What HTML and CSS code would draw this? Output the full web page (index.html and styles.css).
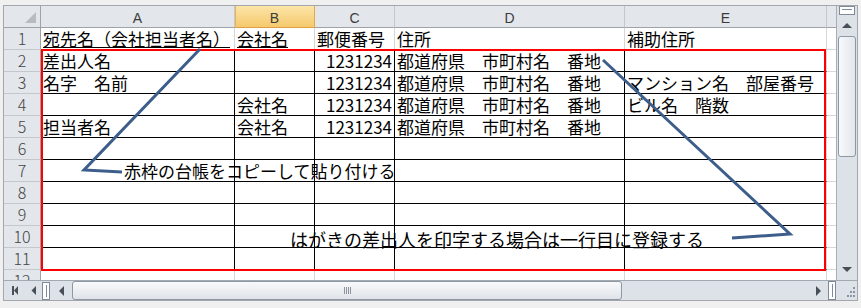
FILE: index.html
```html
<!DOCTYPE html>
<html lang="ja">
<head>
<meta charset="utf-8">
<title>Sheet</title>
<link rel="stylesheet" href="styles.css">
</head>
<body>
<div class="frame">
  <div class="sheet">
    <div class="grid">
      <div class="corner"><span class="tri"></span></div>
      <div class="ch">A</div><div class="ch sel">B</div><div class="ch">C</div><div class="ch">D</div><div class="ch">E</div><div class="ch"></div>

      <div class="rh">1</div><div class="c"><span class="u">宛先名（会社担当者名）</span></div><div class="c"><span class="u">会社名</span></div><div class="c">郵便番号</div><div class="c">住所</div><div class="c">補助住所</div><div class="c"></div>

      <div class="rh">2</div><div class="c k">差出人名</div><div class="c k"></div><div class="c k n">1231234</div><div class="c k">都道府県　市町村名　番地</div><div class="c k e"></div><div class="c"></div>

      <div class="rh">3</div><div class="c k">名字　名前</div><div class="c k"></div><div class="c k n">1231234</div><div class="c k">都道府県　市町村名　番地</div><div class="c k e">マンション名　部屋番号</div><div class="c"></div>

      <div class="rh">4</div><div class="c k"></div><div class="c k">会社名</div><div class="c k n">1231234</div><div class="c k">都道府県　市町村名　番地</div><div class="c k e">ビル名　階数</div><div class="c"></div>

      <div class="rh">5</div><div class="c k">担当者名</div><div class="c k">会社名</div><div class="c k n">1231234</div><div class="c k">都道府県　市町村名　番地</div><div class="c k e"></div><div class="c"></div>

      <div class="rh">6</div><div class="c k"></div><div class="c k"></div><div class="c k"></div><div class="c k"></div><div class="c k e"></div><div class="c"></div>
      <div class="rh">7</div><div class="c k"></div><div class="c k"></div><div class="c k"></div><div class="c k"></div><div class="c k e"></div><div class="c"></div>
      <div class="rh">8</div><div class="c k"></div><div class="c k"></div><div class="c k"></div><div class="c k"></div><div class="c k e"></div><div class="c"></div>
      <div class="rh">9</div><div class="c k"></div><div class="c k"></div><div class="c k"></div><div class="c k"></div><div class="c k e"></div><div class="c"></div>
      <div class="rh">10</div><div class="c k"></div><div class="c k"></div><div class="c k"></div><div class="c k"></div><div class="c k e"></div><div class="c"></div>
      <div class="rh">11</div><div class="c k"></div><div class="c k"></div><div class="c k"></div><div class="c k"></div><div class="c k e"></div><div class="c"></div>
      <div class="rh">12</div><div class="c"></div><div class="c"></div><div class="c"></div><div class="c"></div><div class="c"></div><div class="c"></div>
    </div>

    <div class="redbox"></div>
    <svg class="shapes" width="832" height="274" viewBox="0 0 832 274">
      <polyline points="196,43 80,164 118,166" fill="none" stroke="#3d5d8a" stroke-width="3" stroke-linejoin="miter"/>
      <polyline points="599,54 786,228 728,232" fill="none" stroke="#3d5d8a" stroke-width="3" stroke-linejoin="miter"/>
    </svg>
    <div class="tb tb1">赤枠の台帳をコピーして貼り付ける</div>
    <div class="tb tb2">はがきの差出人を印字する場合は一行目に登録する</div>
  </div>

  <div class="vscroll">
    <div class="vsplit"><span class="vsplit-line"></span></div>
    <div class="vbtn"><span class="arr-up"></span></div>
    <div class="vthumb"></div>
    <div class="vtrack"></div>
    <div class="vbtn down"><span class="arr-down"></span></div>
  </div>

  <div class="hscroll">
    <div class="nav">
      <svg width="38" height="19" viewBox="0 0 38 19">
        <rect x="8" y="5" width="2" height="9" fill="#4a4f57"/>
        <polygon points="10,9.5 14,5 14,14" fill="#4a4f57"/>
        <polygon points="27.5,9.5 32,5 32,14" fill="#4a4f57"/>
      </svg>
    </div>
    <div class="tsplit"><span class="tsplit-line"></span></div>
    <div class="hbtn"><span class="arr-left"></span></div>
    <div class="hthumb"><span class="grip-lines"></span></div>
    <div class="htrack"></div>
    <div class="hbtn right"><span class="arr-right"></span></div>
    <div class="hsplit"><span class="hsplit-line"></span></div>
    <div class="sizegrip">
      <svg width="20" height="19" viewBox="0 0 20 19">
        <g fill="#8d949d">
          <rect x="16" y="6" width="2" height="2"/>
          <rect x="13" y="10" width="2" height="2"/>
          <rect x="16" y="10" width="2" height="2"/>
          <rect x="10" y="14" width="2" height="2"/>
          <rect x="13" y="14" width="2" height="2"/>
          <rect x="16" y="14" width="2" height="2"/>
        </g>
      </svg>
    </div>
  </div>
</div>
</body>
</html>
```

FILE: styles.css
```css
* { box-sizing: border-box; }

body {
  margin: 0;
  width: 861px;
  height: 308px;
  overflow: hidden;
  background: #f0f0f0;
  font-family: "Noto Sans CJK JP", "Noto Sans", sans-serif;
}

.frame {
  margin: 5px 0 0 3px;
  width: 855px;
  height: 296px;
  border: 1px solid #a3a7ad;
  background: #fff;
  display: grid;
  grid-template-columns: 832px 21px;
  grid-template-rows: 274px 20px;
}

.sheet {
  position: relative;
  overflow: hidden;
}

.grid {
  display: grid;
  grid-template-columns: 37px 194px 80px 80px 230px 202px 40px;
  grid-template-rows: repeat(13, 22px);
}

.corner {
  background: #e3e6ea;
  border-right: 1px solid #9ea3a9;
  border-bottom: 1px solid #9ea3a9;
  display: flex;
  justify-content: flex-end;
  align-items: flex-end;
  padding: 0 4px 4px 0;
}

.tri {
  width: 0;
  height: 0;
  border-left: 11px solid transparent;
  border-bottom: 11px solid #b8bcc1;
}

.ch {
  background: #e3e6ea;
  border-right: 1px solid #c4c8cd;
  border-bottom: 1px solid #9ea3a9;
  font-family: "Liberation Sans", Arial, sans-serif;
  font-size: 14px;
  line-height: 21px;
  padding-top: 2px;
  text-align: center;
  color: #3c3c3c;
}

.ch.sel {
  background: linear-gradient(#fbe5a8, #f6c96c);
  border-right-color: #e3a84e;
  border-bottom-color: #e0a03e;
  box-shadow: inset 1px 0 0 #e8b35c;
}

.rh {
  background: #e3e6ea;
  border-right: 1px solid #9ea3a9;
  border-bottom: 1px solid #c4c8cd;
  font-size: 16px;
  font-weight: 300;
  line-height: 21px;
  text-align: center;
  color: #444;
}

.c {
  border-right: 1px solid #d6d6d6;
  border-bottom: 1px solid #d6d6d6;
  font-size: 17px;
  line-height: 21px;
  padding: 0 2px;
  white-space: nowrap;
  color: #000;
}

.c.k {
  border-right-color: #000;
  border-bottom-color: #000;
}

.c.k.e {
  border-right-color: #d6d6d6;
}

.c.n {
  text-align: right;
}

.u {
  text-decoration: underline;
  text-decoration-thickness: 1px;
  text-underline-offset: 1px;
}

.redbox {
  position: absolute;
  left: 37px;
  top: 43px;
  width: 785px;
  height: 222px;
  border: 2px solid #ff0000;
}

.shapes {
  position: absolute;
  left: 0;
  top: 0;
}

.tb {
  position: absolute;
  white-space: nowrap;
  color: #000;
  line-height: 22px;
}

.tb1 {
  left: 120px;
  top: 154px;
  font-size: 17px;
}

.tb2 {
  left: 286px;
  top: 222px;
  font-size: 18px;
}

/* vertical scrollbar */
.vscroll {
  grid-column: 2;
  grid-row: 1;
  background: #dde2e8;
  border-left: 1px solid #a9aeb5;
  display: flex;
  flex-direction: column;
  align-items: center;
}

.vsplit {
  width: 16px;
  height: 9px;
  border: 1px solid #7f8a98;
  background: #fff;
  display: flex;
  justify-content: center;
  padding-top: 2px;
}

.vsplit-line {
  width: 10px;
  height: 1px;
  background: #7f8a98;
}

.vbtn {
  height: 21px;
  width: 100%;
  display: flex;
  justify-content: center;
  align-items: center;
}

.vbtn.down {
  height: 22px;
}

.arr-up {
  width: 0;
  height: 0;
  border-left: 5px solid transparent;
  border-right: 5px solid transparent;
  border-bottom: 5px solid #4a4f57;
}

.arr-down {
  width: 0;
  height: 0;
  border-left: 5px solid transparent;
  border-right: 5px solid transparent;
  border-top: 5px solid #4a4f57;
}

.vthumb {
  width: 18px;
  height: 121px;
  border: 1px solid #8e98a5;
  border-radius: 3px;
  background: linear-gradient(90deg, #f8f9fb, #e2e6eb);
}

.vtrack {
  flex: 1;
}

/* horizontal scrollbar */
.hscroll {
  grid-column: 1 / -1;
  grid-row: 2;
  display: flex;
  background: #dde2e8;
  border-top: 1px solid #a3a9b1;
}

.nav {
  width: 38px;
  display: flex;
}

.tsplit {
  width: 8px;
  margin: 1px 0 0;
  border: 1px solid #7f8a98;
  background: #fff;
  display: flex;
  justify-content: center;
  padding: 2px 0;
}

.tsplit-line {
  width: 1px;
  background: #7f8a98;
}

.hbtn {
  width: 22px;
  display: flex;
  justify-content: center;
  align-items: center;
}

.hbtn.right {
  width: 20px;
}

.arr-left {
  width: 0;
  height: 0;
  border-top: 5px solid transparent;
  border-bottom: 5px solid transparent;
  border-right: 5px solid #4a4f57;
}

.arr-right {
  width: 0;
  height: 0;
  border-top: 5px solid transparent;
  border-bottom: 5px solid transparent;
  border-left: 5px solid #4a4f57;
}

.hthumb {
  width: 550px;
  border: 1px solid #8e98a5;
  border-radius: 3px;
  background: linear-gradient(#f8f9fb, #dfe3e8);
  display: flex;
  justify-content: center;
  align-items: center;
}

.grip-lines {
  width: 7px;
  height: 7px;
  background: repeating-linear-gradient(90deg, #8d949d 0 1px, transparent 1px 2px);
}

.htrack {
  flex: 1;
}

.hsplit {
  width: 8px;
  border: 1px solid #7f8a98;
  background: #fff;
  display: flex;
  justify-content: center;
  padding: 2px 0;
}

.hsplit-line {
  width: 1px;
  background: #7f8a98;
}

.sizegrip {
  width: 21px;
  display: flex;
  justify-content: flex-end;
}
```
